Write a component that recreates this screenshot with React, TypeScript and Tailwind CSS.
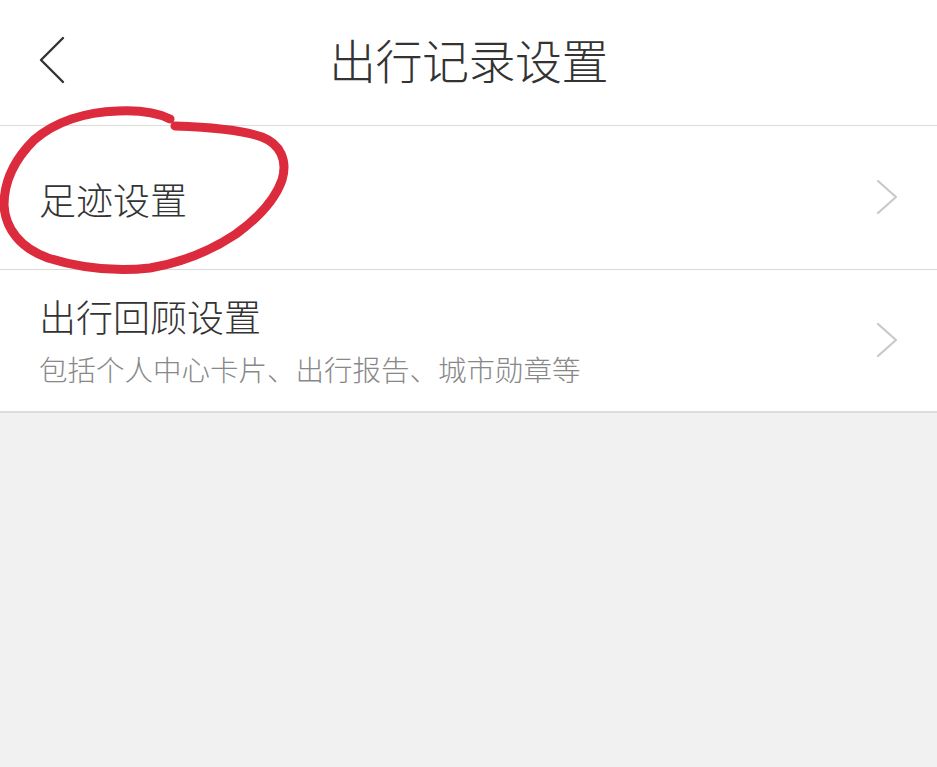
import React from "react";

const font = { fontFamily: '"Noto Sans CJK SC", "Noto Sans", sans-serif' };

function ChevronRight() {
  return (
    <svg width="24" height="40" viewBox="0 0 24 40" className="shrink-0">
      <polyline points="3,3 21,19 3,35" fill="none" stroke="#c9c9c9" strokeWidth="2.2" strokeLinecap="round" strokeLinejoin="round" />
    </svg>
  );
}

export default function App() {
  return (
    <div className="relative w-[937px] h-[767px] bg-[#f1f1f1] overflow-hidden font-light" style={font}>
      <div className="h-[126px] bg-white border-b border-[#dcdcdc] flex items-center justify-center relative">
        <svg width="30" height="50" viewBox="0 0 30 50" className="absolute left-[37px] top-[35px]">
          <polyline points="26,3 4,25 26,47" fill="none" stroke="#333" strokeWidth="2.4" strokeLinecap="round" strokeLinejoin="round" />
        </svg>
        <div className="text-[47px] leading-[56px] text-[#333] mt-[-7px] tracking-[-0.5px]">出行记录设置</div>
      </div>
      <div className="h-[144px] bg-white border-b border-[#d9d9d9] flex items-center justify-between pl-[39px] pr-[38px]">
        <div className="text-[37px] leading-[44px] text-[#333] mt-[2px]">足迹设置</div>
        <ChevronRight />
      </div>
      <div className="h-[143px] bg-white border-b-2 border-[#dcdcdc] flex items-center justify-between pl-[39px] pr-[38px]">
        <div className="flex flex-col">
          <div className="text-[37px] leading-[44px] text-[#333]">出行回顾设置</div>
          <div className="text-[28.5px] leading-[36px] text-[#888] mt-[13px]">包括个人中心卡片、出行报告、城市勋章等</div>
        </div>
        <ChevronRight />
      </div>
      <svg className="absolute left-0 top-0 pointer-events-none" width="937" height="767" viewBox="0 0 937 767">
        <path
          d="M175,126 C205,127 240,129 262,137 C280,144 288,160 282,180 C275,200 258,218 236,234 C212,250 185,262 150,268 C115,272 80,268 48,258 C20,248 5,228 4,205 C4,180 16,158 34,140 C55,122 85,112 118,111 C140,110 158,113 170,119"
          fill="none"
          stroke="#dc2b3d"
          strokeWidth="9"
          strokeLinecap="round"
          strokeLinejoin="round"
        />
      </svg>
    </div>
  );
}
